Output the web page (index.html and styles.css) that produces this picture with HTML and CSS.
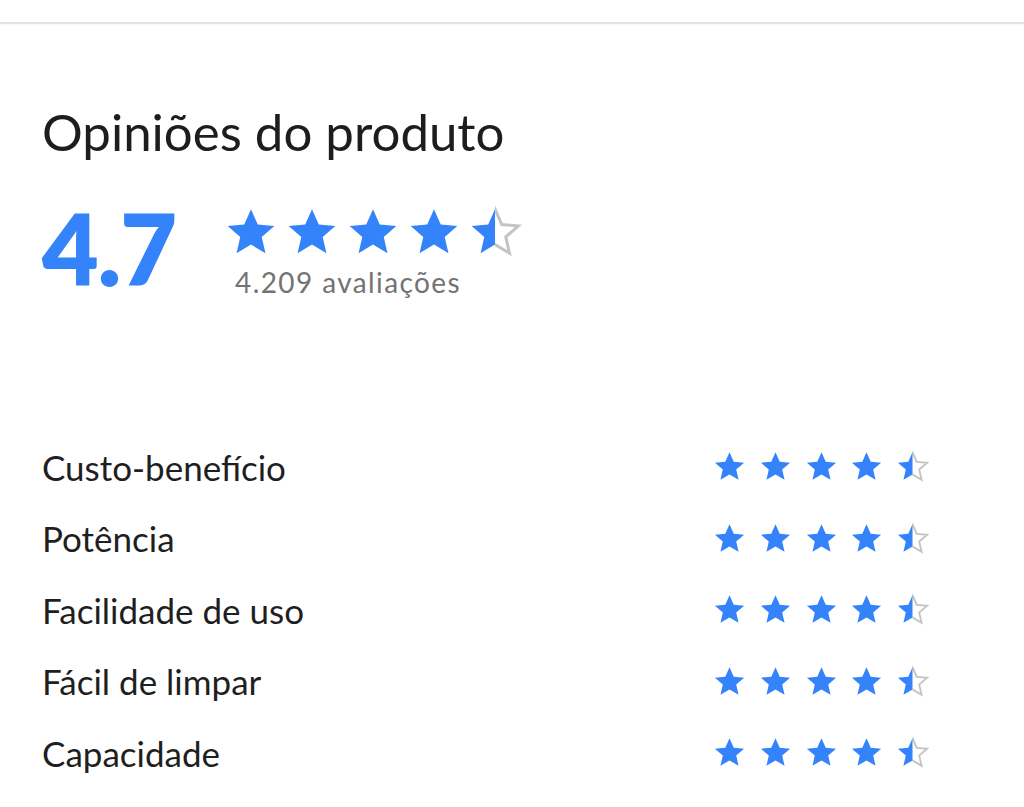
FILE: index.html
```html
<!DOCTYPE html>
<html lang="pt-BR">
<head>
<meta charset="utf-8">
<title>Opiniões do produto</title>
<link rel="stylesheet" href="styles.css">
</head>
<body>
<svg class="defs" width="0" height="0" aria-hidden="true">
  <defs>
    <symbol id="star" viewBox="0 0 24 24">
      <path d="M12 2.2l2.9 6.6 7.1.6-5.4 4.7 1.6 7-6.2-3.7-6.2 3.7 1.6-7L2 9.4l7.1-.6z"/>
    </symbol>
    <clipPath id="left-half"><rect x="0" y="0" width="12" height="24"/></clipPath>
    <clipPath id="right-half"><rect x="12" y="0" width="12" height="24"/></clipPath>
    <symbol id="star-half" viewBox="0 0 24 24">
      <path clip-path="url(#right-half)" fill="none" stroke="#c4c4c4" stroke-width="1.3" stroke-linejoin="miter" d="M12 2.2l2.9 6.6 7.1.6-5.4 4.7 1.6 7-6.2-3.7-6.2 3.7 1.6-7L2 9.4l7.1-.6z"/>
      <path clip-path="url(#left-half)" fill="#3483fa" d="M12 2.2l2.9 6.6 7.1.6-5.4 4.7 1.6 7-6.2-3.7-6.2 3.7 1.6-7L2 9.4l7.1-.6z"/>
    </symbol>
  </defs>
</svg>

<header class="topbar"></header>

<main class="reviews">
  <h1 class="title">Opiniões do produto</h1>

  <section class="summary">
    <div class="average">4.7</div>
    <div class="summary-side">
      <div class="stars stars-lg">
        <svg class="star"><use href="#star"/></svg>
        <svg class="star"><use href="#star"/></svg>
        <svg class="star"><use href="#star"/></svg>
        <svg class="star"><use href="#star"/></svg>
        <svg class="star"><use href="#star-half"/></svg>
      </div>
      <div class="count">4.209 avaliações</div>
    </div>
  </section>

  <ul class="attributes">
    <li class="attr">
      <span class="attr-name">Custo-benefício</span>
      <span class="stars stars-sm">
        <svg class="star"><use href="#star"/></svg><svg class="star"><use href="#star"/></svg><svg class="star"><use href="#star"/></svg><svg class="star"><use href="#star"/></svg><svg class="star"><use href="#star-half"/></svg>
      </span>
    </li>
    <li class="attr">
      <span class="attr-name">Potência</span>
      <span class="stars stars-sm">
        <svg class="star"><use href="#star"/></svg><svg class="star"><use href="#star"/></svg><svg class="star"><use href="#star"/></svg><svg class="star"><use href="#star"/></svg><svg class="star"><use href="#star-half"/></svg>
      </span>
    </li>
    <li class="attr">
      <span class="attr-name">Facilidade de uso</span>
      <span class="stars stars-sm">
        <svg class="star"><use href="#star"/></svg><svg class="star"><use href="#star"/></svg><svg class="star"><use href="#star"/></svg><svg class="star"><use href="#star"/></svg><svg class="star"><use href="#star-half"/></svg>
      </span>
    </li>
    <li class="attr">
      <span class="attr-name">Fácil de limpar</span>
      <span class="stars stars-sm">
        <svg class="star"><use href="#star"/></svg><svg class="star"><use href="#star"/></svg><svg class="star"><use href="#star"/></svg><svg class="star"><use href="#star"/></svg><svg class="star"><use href="#star-half"/></svg>
      </span>
    </li>
    <li class="attr">
      <span class="attr-name">Capacidade</span>
      <span class="stars stars-sm">
        <svg class="star"><use href="#star"/></svg><svg class="star"><use href="#star"/></svg><svg class="star"><use href="#star"/></svg><svg class="star"><use href="#star"/></svg><svg class="star"><use href="#star-half"/></svg>
      </span>
    </li>
  </ul>
</main>
</body>
</html>
```

FILE: styles.css
```css
* { box-sizing: border-box; }

html, body {
  margin: 0;
  padding: 0;
  background: #ffffff;
  font-family: "Lato", "Noto Sans", Arial, sans-serif;
  color: #1f1f1f;
  overflow: hidden;
}

.defs {
  position: absolute;
  width: 0;
  height: 0;
  overflow: hidden;
}

.topbar {
  height: 24px;
  border-bottom: 2px solid #e3e3e3;
  box-shadow: 0 1px 2px rgba(0, 0, 0, 0.04);
}

.reviews {
  padding: 0 0 0 42px;
}

.title {
  margin: 78px 0 0;
  font-size: 51px;
  font-weight: 400;
  line-height: 60px;
  color: #1d1d1d;
}

.summary {
  display: flex;
  align-items: flex-start;
  margin-top: 37px;
}

.average {
  width: 181px;
  flex: none;
  font-size: 98px;
  font-weight: 800;
  line-height: 98px;
  color: #3483fa;
  letter-spacing: -1px;
}

.summary-side {
  padding-top: 5px;
  display: flex;
  flex-direction: column;
}

.stars {
  display: flex;
}

.stars-lg {
  gap: 5px;
}

.stars-lg .star {
  width: 56px;
  height: 56px;
  fill: #3483fa;
}

.count {
  margin-top: 7px;
  margin-left: 12px;
  font-size: 28px;
  line-height: 30px;
  letter-spacing: 1.4px;
  color: #737373;
}

.attributes {
  list-style: none;
  margin: 134px 0 0;
  padding: 0;
  width: 888px;
}

.attr {
  display: flex;
  align-items: center;
  justify-content: space-between;
  height: 71.5px;
}

.attr-name {
  font-size: 35px;
  line-height: 42px;
  color: #1f1f1f;
}

.stars-sm {
  gap: 10.7px;
}

.stars-sm .star {
  width: 35px;
  height: 35px;
  fill: #3483fa;
}
```
